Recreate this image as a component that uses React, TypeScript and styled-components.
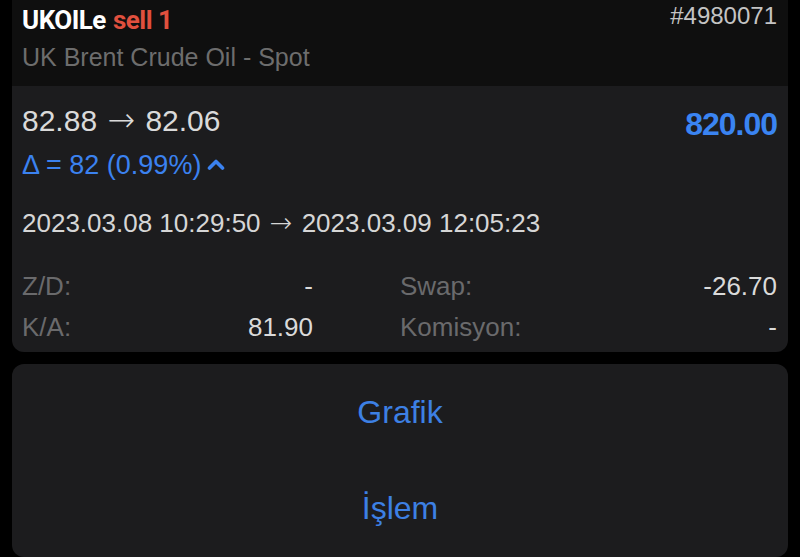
import React from "react";
import styled, { createGlobalStyle } from "styled-components";

const Global = createGlobalStyle`
  html, body { margin: 0; padding: 0; background: #000; }
  body { font-family: "Liberation Sans", Arial, sans-serif; -webkit-font-smoothing: antialiased; }
  * { box-sizing: border-box; }
`;

const Page = styled.div`
  width: 800px;
  height: 557px;
  overflow: hidden;
  background: #000;
  padding: 0 12px;
  display: flex;
  flex-direction: column;
`;

const Header = styled.header`
  height: 86px;
  background: #0f0f0f;
  padding: 3px 11px 0 10px;
  display: flex;
  justify-content: space-between;
  align-items: flex-start;
`;

const TitleBlock = styled.div`
  display: flex;
  flex-direction: column;
  gap: 4px;
`;

const Title = styled.div`
  font-family: Roboto, "Liberation Sans", sans-serif;
  font-weight: 700;
  font-size: 26px;
  line-height: 34px;
  letter-spacing: -0.5px;
  color: #fff;
  white-space: nowrap;
`;

const Side = styled.span`
  color: #e0503e;
  margin-left: 7px;
`;

const Subtitle = styled.div`
  font-size: 25px;
  line-height: 32px;
  color: #6d6d6d;
  white-space: nowrap;
`;

const Ticket = styled.div`
  font-size: 24px;
  line-height: 28px;
  color: #c4c4c4;
  margin-top: -1px;
`;

const Card = styled.section`
  background: #1c1c1e;
  border-radius: 0 0 12px 12px;
  padding: 16px 11px 4px 10px;
  display: flex;
  flex-direction: column;
`;

const PriceRow = styled.div`
  height: 36px;
  display: flex;
  justify-content: space-between;
  align-items: flex-start;
`;

const Prices = styled.div`
  font-size: 30px;
  line-height: 36px;
  color: #dadada;
  white-space: nowrap;
`;

const Arrow = styled.span<{ $size: number; $gap: number }>`
  font-family: "DejaVu Sans", "Liberation Sans", sans-serif;
  font-weight: 300;
  font-size: ${(p) => p.$size}px;
  margin: 0 ${(p) => p.$gap}px;
`;

const Profit = styled.div`
  font-weight: 700;
  font-size: 32px;
  line-height: 36px;
  letter-spacing: -1px;
  color: #3a84f2;
  margin-top: 4px;
`;

const Delta = styled.div`
  margin-top: 11px;
  font-size: 27px;
  line-height: 32px;
  color: #3b82f0;
  display: flex;
  align-items: center;
  white-space: nowrap;
`;

const Chevron = styled.svg`
  width: 18px;
  height: 11px;
  margin-left: 6px;
  margin-top: -2px;
`;

const Times = styled.div`
  margin-top: 26px;
  font-size: 26px;
  line-height: 32px;
  color: #d6d6d6;
  white-space: nowrap;
`;

const Stats = styled.div`
  margin-top: 27px;
  display: grid;
  grid-template-columns: 291px 377px;
  column-gap: 87px;
`;

const Stat = styled.div`
  display: flex;
  justify-content: space-between;
  font-size: 26px;
  line-height: 41px;
`;

const Label = styled.span`
  color: #6a6a6c;
`;

const Value = styled.span`
  color: #dadada;
`;

const Actions = styled.nav`
  margin-top: 12px;
  height: 193px;
  background: #1c1c1e;
  border-radius: 12px;
  display: flex;
  flex-direction: column;
`;

const Action = styled.button`
  flex: 1;
  border: 0;
  background: transparent;
  font-family: "Liberation Sans", Arial, sans-serif;
  font-size: 32px;
  color: #3d80e4;
  display: flex;
  align-items: center;
  justify-content: center;
  padding: 0;
`;

const stats: [string, string][] = [
  ["Z/D:", "-"],
  ["Swap:", "-26.70"],
  ["K/A:", "81.90"],
  ["Komisyon:", "-"],
];

export default function App() {
  return (
    <Page>
      <Global />
      <Header>
        <TitleBlock>
          <Title>
            UKOILe<Side>sell 1</Side>
          </Title>
          <Subtitle>UK Brent Crude Oil - Spot</Subtitle>
        </TitleBlock>
        <Ticket>#4980071</Ticket>
      </Header>
      <Card>
        <PriceRow>
          <Prices>
            82.88 <Arrow $size={33} $gap={2}>→</Arrow> 82.06
          </Prices>
          <Profit>820.00</Profit>
        </PriceRow>
        <Delta>
          Δ = 82 (0.99%)
          <Chevron viewBox="0 0 18 11">
            <polyline
              points="2.5,9 9,2.5 15.5,9"
              fill="none"
              stroke="#3b82f0"
              strokeWidth="3.6"
              strokeLinecap="round"
              strokeLinejoin="round"
            />
          </Chevron>
        </Delta>
        <Times>
          2023.03.08 10:29:50 <Arrow $size={27} $gap={2}>→</Arrow> 2023.03.09 12:05:23
        </Times>
        <Stats>
          {stats.map(([l, v]) => (
            <Stat key={l}>
              <Label>{l}</Label>
              <Value>{v}</Value>
            </Stat>
          ))}
        </Stats>
      </Card>
      <Actions>
        <Action>Grafik</Action>
        <Action>İşlem</Action>
      </Actions>
    </Page>
  );
}
